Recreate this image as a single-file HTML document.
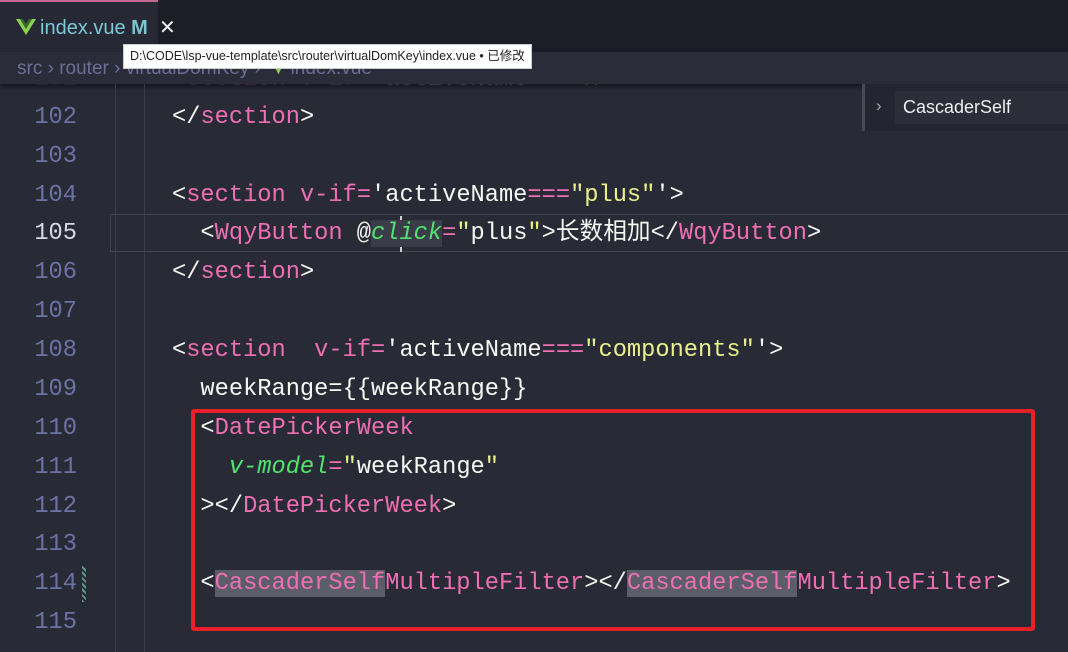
<!DOCTYPE html>
<html><head><meta charset="utf-8"><style>
body{margin:0;width:1068px;height:652px;overflow:hidden;background:#282a36;position:relative;font-family:"Liberation Mono","Noto Sans CJK SC",monospace}
.ln{position:absolute;left:0;width:77px;text-align:right;color:#6c73a4;font-size:23.7px;height:39px;line-height:39px}
.cd{position:absolute;left:172px;white-space:pre;color:#f8f8f2;font-size:23.7px;height:39px;line-height:39px}
.t{color:#ee6fb3}.s{color:#e9f08c}.g{color:#50e36f;font-style:italic}.hl{background:#5b5d68}
.guide{position:absolute;top:84px;bottom:0;width:1px;background:#3a3c48}
</style></head><body>
<div class="ln" style="top:60px">101</div><div class="cd" style="top:60px">&lt;<span class="t">section</span> <span class="t">v-if</span><span class="t">=</span>'activeName<span class="t">===</span><span class="s">"x"</span>'&gt;</div>
<div style="position:absolute;left:0;top:0;width:1068px;height:52px;background:#1c1d26"></div>
<div style="position:absolute;left:0;top:0;width:158px;height:52px;background:#262833;border-top:2px solid #c5688f;box-sizing:border-box"></div>
<svg style="position:absolute;left:16px;top:19px" width="20" height="16" viewBox="0 0 20 16"><path d="M0 0h4l6 10 6-10h4L10 16z" fill="#8dd24f"/><path d="M4 0h3l3 5 3-5h3l-6 10z" fill="#3d6b2a"/></svg>
<div style="position:absolute;left:40px;top:15px;font-family:'Liberation Sans',sans-serif;font-size:20px;color:#7dc9d6;white-space:pre">index.vue <b style="color:#79c6cf">M</b>  <span style="color:#eee">✕</span></div>
<div style="position:absolute;left:0;top:52px;width:1068px;height:32px;background:#2a2c39;box-shadow:0 3px 5px #15161c"></div>
<div style="position:absolute;left:17px;top:58px;font-family:'Liberation Sans',sans-serif;font-size:19px;color:#6b6f96;white-space:pre">src › router › virtualDomKey ›  <span style="color:#8dd24f;font-size:14px">▼</span> index.vue</div>
<div style="position:absolute;left:123px;top:44px;height:23px;padding:0 6px;background:#fff;border:1px solid #ccc;font-family:'Liberation Sans','Noto Sans CJK SC',sans-serif;font-size:12.5px;line-height:23px;color:#222;white-space:nowrap">D:\CODE\lsp-vue-template\src\router\virtualDomKey\index.vue • 已修改</div>
<div class="guide" style="left:115px"></div><div class="guide" style="left:144px"></div>
<div style="position:absolute;left:110px;top:214px;width:960px;height:38px;border:1px solid #41434f;box-sizing:border-box"></div>
<div style="position:absolute;left:400px;top:216px;width:2px;height:36px;background:#cfcfcf"></div>
<div style="position:absolute;left:862px;top:84px;width:206px;height:47px;background:#232530;border-left:3px solid #474a55"></div>
<div style="position:absolute;left:876px;top:96px;color:#aaa;font-family:'Liberation Sans',sans-serif;font-size:17px">›</div>
<div style="position:absolute;left:895px;top:91px;width:173px;height:33px;background:#2b2d38;color:#eee;font-family:'Liberation Sans',sans-serif;font-size:18px;line-height:33px;padding-left:8px">CascaderSelf</div>

<div class="ln" style="top:98px">102</div><div class="cd" style="top:98px">&lt;/<span class="t">section</span>&gt;</div>
<div class="ln" style="top:137px">103</div>
<div class="ln" style="top:176px">104</div><div class="cd" style="top:176px">&lt;<span class="t">section</span> <span class="t">v-if</span><span class="t">=</span>'activeName<span class="t">===</span><span class="s">"plus"</span>'&gt;</div>
<div class="ln" style="top:214px;color:#d8d8e6">105</div><div class="cd" style="top:214px">  &lt;<span class="t">WqyButton</span> @<span class="g hl" style="background:#3a3c48">click</span><span class="t">=</span><span class="s">"</span>plus<span class="s">"</span>&gt;长数相加&lt;/<span class="t">WqyButton</span>&gt;</div>
<div class="ln" style="top:253px">106</div><div class="cd" style="top:253px">&lt;/<span class="t">section</span>&gt;</div>
<div class="ln" style="top:292px">107</div>
<div class="ln" style="top:331px">108</div><div class="cd" style="top:331px">&lt;<span class="t">section</span>  <span class="t">v-if</span><span class="t">=</span>'activeName<span class="t">===</span><span class="s">"components"</span>'&gt;</div>
<div class="ln" style="top:370px">109</div><div class="cd" style="top:370px">  weekRange={{weekRange}}</div>
<div class="ln" style="top:409px">110</div><div class="cd" style="top:409px">  &lt;<span class="t">DatePickerWeek</span></div>
<div class="ln" style="top:448px">111</div><div class="cd" style="top:448px">    <span class="g">v-model</span><span class="t">=</span><span class="s">"</span>weekRange<span class="s">"</span></div>
<div class="ln" style="top:487px">112</div><div class="cd" style="top:487px">  &gt;&lt;/<span class="t">DatePickerWeek</span>&gt;</div>
<div class="ln" style="top:525px">113</div>
<div class="ln" style="top:564px">114</div><div class="cd" style="top:564px">  &lt;<span class="t hl">CascaderSelf</span><span class="t">MultipleFilter</span>&gt;&lt;/<span class="t hl">CascaderSelf</span><span class="t">MultipleFilter</span>&gt;</div>
<div style="position:absolute;left:82px;top:566px;width:4px;height:36px;background:repeating-linear-gradient(45deg,#5a9a8a 0 2px,transparent 2px 4px)"></div>
<div class="ln" style="top:603px">115</div>
<div style="position:absolute;left:191px;top:409px;width:844px;height:222px;border:4px solid #e8202a;border-radius:3px;box-sizing:border-box"></div>
</body></html>
